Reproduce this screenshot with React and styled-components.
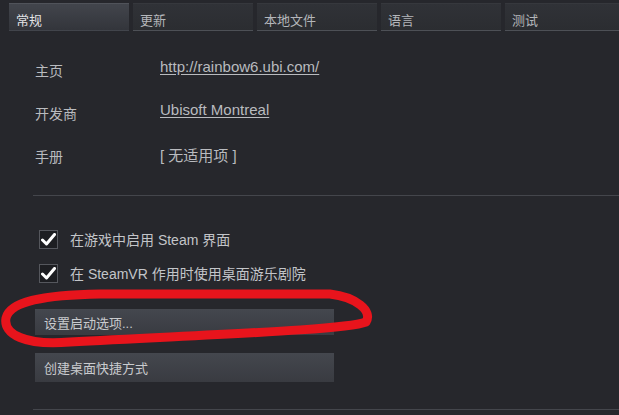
import styled, { createGlobalStyle } from "styled-components";

const GlobalStyle = createGlobalStyle`
  html, body {
    margin: 0;
    padding: 0;
    background: #26272c;
  }
  body {
    font-family: "Liberation Sans", "Noto Sans CJK SC", sans-serif;
    color: #c3c5c9;
  }
`;

const tabs = ["常规", "更新", "本地文件", "语言", "测试"];

const info = [
  { label: "主页", value: "http://rainbow6.ubi.com/", link: true },
  { label: "开发商", value: "Ubisoft Montreal", link: true },
  { label: "手册", value: "[ 无适用项 ]", link: false },
];

const options = ["在游戏中启用 Steam 界面", "在 SteamVR 作用时使用桌面游乐剧院"];

const App = () => {
  return (
    <Page>
      <GlobalStyle />
      <TabBar>
        {tabs.map((t, idx) => (
          <Tab key={t} $active={idx === 0}>
            {t}
          </Tab>
        ))}
      </TabBar>

      <Content>
        <InfoGrid>
          {info.map((row) => (
            <InfoRow key={row.label}>
              <Label>{row.label}</Label>
              <Value $link={row.link}>{row.value}</Value>
            </InfoRow>
          ))}
        </InfoGrid>

        <Divider />

        <Options>
          {options.map((o) => (
            <CheckRow key={o}>
              <Box>
                <svg width="15" height="13" viewBox="0 0 15 13">
                  <path
                    d="M1.5 7 L5.5 11 L13.5 1.5"
                    fill="none"
                    stroke="#ffffff"
                    strokeWidth="3"
                    strokeLinecap="round"
                    strokeLinejoin="round"
                  />
                </svg>
              </Box>
              <span>{o}</span>
            </CheckRow>
          ))}
        </Options>

        <Buttons>
          <Button>设置启动选项...</Button>
          <Button $tall>创建桌面快捷方式</Button>
        </Buttons>

        <Divider />
      </Content>

      {/* red hand-drawn annotation around the launch options button */}
      <Marker width="619" height="415" viewBox="0 0 619 415">
        <path
          d="M330 294 C 356 297, 373 311, 366 322 C 345 330, 220 334, 70 342 C 25 346, 3 334, 6 318 C 10 302, 40 295, 100 294 L 330 294"
          fill="none"
          stroke="#e8141c"
          strokeWidth="9"
          strokeLinecap="round"
          strokeLinejoin="round"
        />
      </Marker>
    </Page>
  );
};

export default App;

const Page = styled.div`
  position: relative;
  width: 619px;
  height: 415px;
  overflow: hidden;
  background: #26272c;
`;

const TabBar = styled.div`
  display: flex;
  gap: 4px;
  padding: 3px 0 0 9px;
  height: 28px;
`;

const Tab = styled.div`
  flex: 0 0 120px;
  &:last-child {
    flex: 1;
  }
  box-sizing: border-box;
  padding: 6px 0 0 7px;
  font-size: 13px;
  color: ${(p) => (p.$active ? "#e2e3e6" : "#b4b6ba")};
  background: ${(p) =>
    p.$active
      ? "linear-gradient(#42454c, #33353b)"
      : "linear-gradient(#303237, #2b2d31)"};
  border-top: 1px solid ${(p) => (p.$active ? "#50535a" : "#36383d")};
  border-bottom: 1px solid ${(p) => (p.$active ? "transparent" : "#4d5056")};
`;

const Content = styled.div`
  padding: 0 0 0 33px;
`;

const InfoGrid = styled.div`
  display: flex;
  flex-direction: column;
  gap: 19px;
  padding: 27px 0 0 2px;
  height: 164px;
  box-sizing: border-box;
`;

const InfoRow = styled.div`
  display: grid;
  grid-template-columns: 125px 1fr;
  height: 24px;
  align-items: start;
`;

const Label = styled.div`
  font-size: 14px;
  color: #b9bbbf;
  padding-top: 2px;
`;

const Value = styled.div`
  font-size: 15px;
  color: #b9bbbf;
  text-decoration: ${(p) => (p.$link ? "underline" : "none")};
  text-underline-offset: 2px;
`;

const Divider = styled.div`
  height: 1px;
  background: #44464c;
`;

const Options = styled.div`
  display: flex;
  flex-direction: column;
  gap: 14px;
  padding: 33px 0 0 6px;
`;

const CheckRow = styled.div`
  display: flex;
  align-items: center;
  gap: 12px;
  font-size: 14px;
  color: #c3c5c9;
`;

const Box = styled.div`
  width: 19px;
  height: 19px;
  box-sizing: border-box;
  display: flex;
  align-items: center;
  justify-content: center;
  background: #1d1e22;
  border: 1px solid #55575d;
`;

const Buttons = styled.div`
  display: flex;
  flex-direction: column;
  gap: 18px;
  padding: 26px 0 27px 2px;
`;

const Button = styled.div`
  width: 299px;
  height: ${(p) => (p.$tall ? "29px" : "26px")};
  box-sizing: border-box;
  display: flex;
  align-items: center;
  padding-left: 9px;
  font-size: 13px;
  color: #c9cbce;
  background: linear-gradient(#44474e, #393b41);
`;

const Marker = styled.svg`
  position: absolute;
  left: 0;
  top: 0;
  pointer-events: none;
`;
